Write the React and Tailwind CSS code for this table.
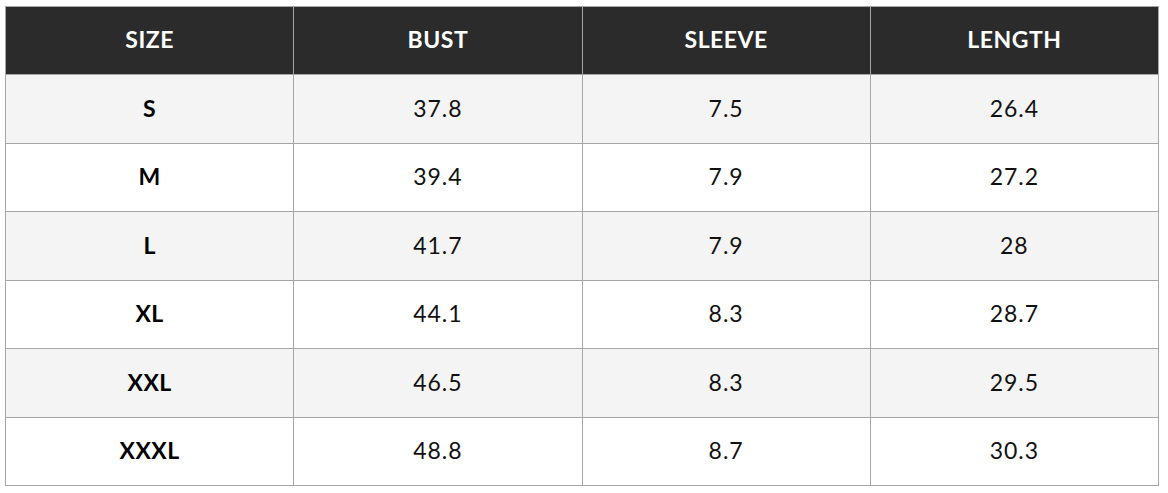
import React from "react";

const rows = [
  ["S", "37.8", "7.5", "26.4"],
  ["M", "39.4", "7.9", "27.2"],
  ["L", "41.7", "7.9", "28"],
  ["XL", "44.1", "8.3", "28.7"],
  ["XXL", "46.5", "8.3", "29.5"],
  ["XXXL", "48.8", "8.7", "30.3"],
];

function App() {
  return (
    <div className="bg-white w-[1168px] h-[493px] pl-[5px] pt-[6px] font-['Lato',sans-serif]">
      <table className="w-[1154px] border-collapse table-fixed">
        <thead>
          <tr className="bg-[#2b2b2b] text-white h-[68px]">
            {["SIZE", "BUST", "SLEEVE", "LENGTH"].map((h) => (
              <th key={h} className="border border-[#a6a6a6] pb-[2px] text-[23px] tracking-[0.5px] font-bold text-center">
                {h}
              </th>
            ))}
          </tr>
        </thead>
        <tbody>
          {rows.map((r, i) => (
            <tr key={r[0]} className={i % 2 === 0 ? "bg-[#f4f4f4] h-[68.5px]" : "bg-white h-[68.5px]"}>
              {r.map((c, j) => (
                <td
                  key={j}
                  className={
                    j === 0
                      ? "border border-[#a6a6a6] pb-[2px] text-center text-[23px] tracking-[0.5px] font-bold text-black"
                      : "border border-[#a6a6a6] pb-[2px] text-center text-[23px] tracking-[1px] text-[#111]"
                  }
                >
                  {c}
                </td>
              ))}
            </tr>
          ))}
        </tbody>
      </table>
    </div>
  );
}

export default App;
